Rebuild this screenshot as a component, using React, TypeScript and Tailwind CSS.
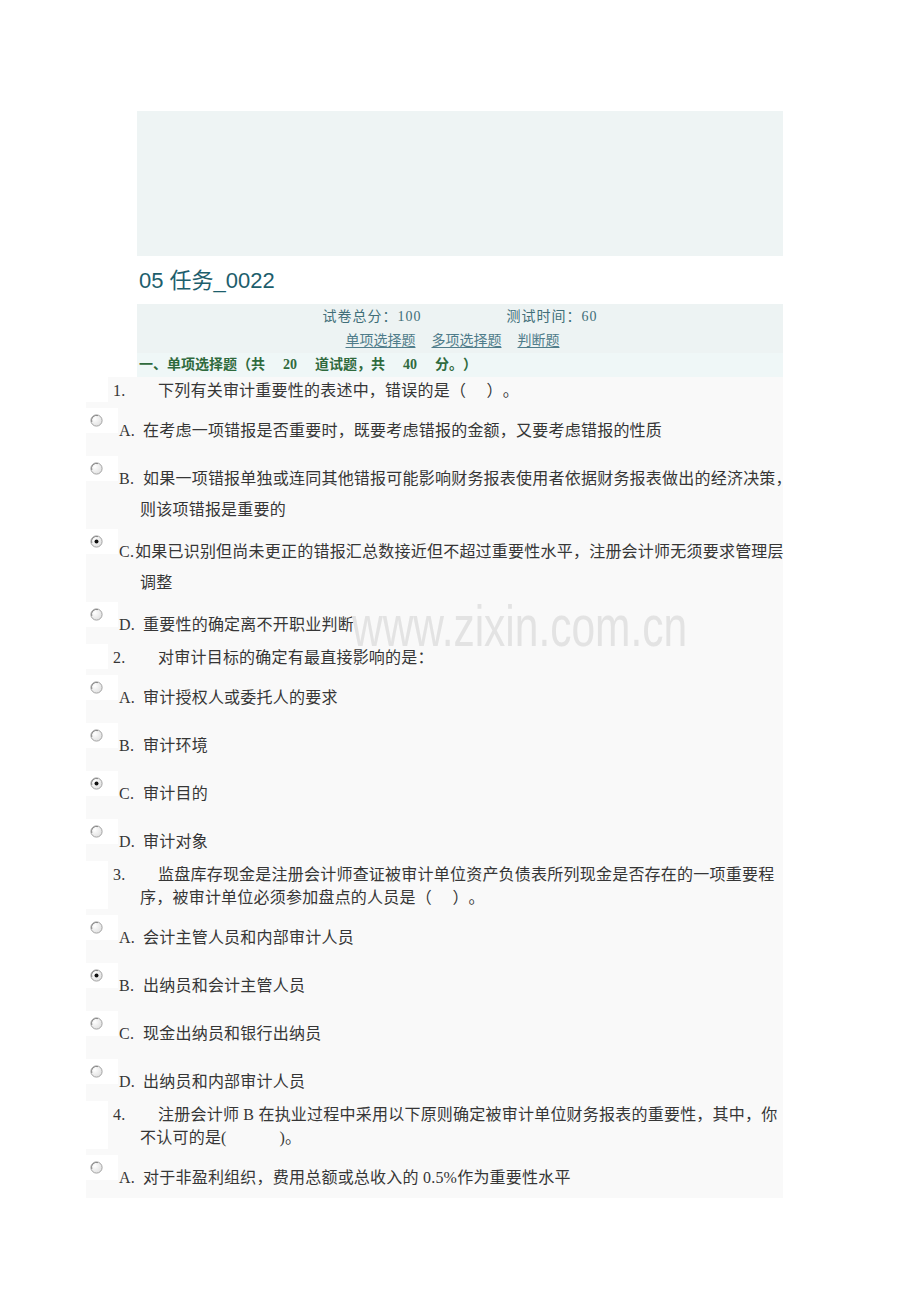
import clsx from 'clsx';

type Opt = { key: string; lines: string[]; checked?: boolean; tight?: boolean };
type Question = { no: string; lines: string[]; opts: Opt[] };

const BODY = "font-['Liberation_Serif','Noto_Sans_CJK_SC',serif] [text-spacing-trim:space-all]";
const SANS = "font-['Liberation_Sans','Noto_Sans_CJK_SC',sans-serif]";

const QUESTIONS: Question[] = [
  {
    no: '1.',
    lines: ['下列有关审计重要性的表述中，错误的是（　 ）。'],
    opts: [
      { key: 'A.', lines: ['在考虑一项错报是否重要时，既要考虑错报的金额，又要考虑错报的性质'] },
      {
        key: 'B.',
        lines: ['如果一项错报单独或连同其他错报可能影响财务报表使用者依据财务报表做出的经济决策，', '则该项错报是重要的'],
      },
      {
        key: 'C.',
        tight: true,
        checked: true,
        lines: ['如果已识别但尚未更正的错报汇总数接近但不超过重要性水平，注册会计师无须要求管理层', '调整'],
      },
      { key: 'D.', lines: ['重要性的确定离不开职业判断'] },
    ],
  },
  {
    no: '2.',
    lines: ['对审计目标的确定有最直接影响的是：'],
    opts: [
      { key: 'A.', lines: ['审计授权人或委托人的要求'] },
      { key: 'B.', lines: ['审计环境'] },
      { key: 'C.', lines: ['审计目的'], checked: true },
      { key: 'D.', lines: ['审计对象'] },
    ],
  },
  {
    no: '3.',
    lines: ['监盘库存现金是注册会计师查证被审计单位资产负债表所列现金是否存在的一项重要程', '序，被审计单位必须参加盘点的人员是（　 ）。'],
    opts: [
      { key: 'A.', lines: ['会计主管人员和内部审计人员'] },
      { key: 'B.', lines: ['出纳员和会计主管人员'], checked: true },
      { key: 'C.', lines: ['现金出纳员和银行出纳员'] },
      { key: 'D.', lines: ['出纳员和内部审计人员'] },
    ],
  },
  {
    no: '4.',
    lines: ['注册会计师 B 在执业过程中采用以下原则确定被审计单位财务报表的重要性，其中，你', '不认可的是(　　　 )。'],
    opts: [{ key: 'A.', lines: ['对于非盈利组织，费用总额或总收入的 0.5%作为重要性水平'] }],
  },
];

function Radio({ checked }: { checked?: boolean }) {
  return (
    <svg width="13" height="13" viewBox="0 0 13 13">
      <defs>
        <radialGradient id="rg" cx="0.35" cy="0.35" r="0.8">
          <stop offset="0" stopColor="#ffffff" />
          <stop offset="1" stopColor="#dcdcdc" />
        </radialGradient>
      </defs>
      <circle cx="6.5" cy="6.5" r="5.6" fill="url(#rg)" stroke="#a3a3a3" strokeWidth="1" />
      <path d="M1.8 8 A5 5 0 0 1 8 1.6" fill="none" stroke="#8a8a8a" strokeWidth="1" />
      {checked && <circle cx="6.5" cy="6.5" r="2" fill="#111" />}
    </svg>
  );
}

function Option({ o }: { o: Opt }) {
  const two = o.lines.length > 1;
  return (
    <div className={clsx('flex pt-[6px]', two ? 'h-[73px]' : 'h-[48px]')}>
      <div className="w-[32px] h-[25px] shrink-0 bg-white pl-[4px] pt-[6px]">
        <Radio checked={o.checked} />
      </div>
      <div className="pt-[7px] pl-[22px] leading-[31px] whitespace-nowrap">
        <span className={clsx('-ml-[21px] inline-block', o.tight ? 'w-[16px]' : 'w-[24px]')}>{o.key}</span>
        {o.lines[0]}
        {two && (
          <>
            <br />
            {o.lines[1]}
          </>
        )}
      </div>
    </div>
  );
}

function QuestionBlock({ q }: { q: Question }) {
  return (
    <div>
      <div className="flex">
        <div className="w-[22px] shrink-0 bg-white" />
        <div className="pt-[2px] pl-[32px] leading-[23px] whitespace-nowrap">
          <span className="-ml-[27px] inline-block w-[45px]">{q.no}</span>
          {q.lines[0]}
          {q.lines[1] && (
            <>
              <br />
              {q.lines[1]}
            </>
          )}
        </div>
      </div>
      {q.opts.map((o) => (
        <Option key={o.key} o={o} />
      ))}
    </div>
  );
}

export default function App() {
  return (
    <div className={clsx('w-[920px] min-h-[1302px] bg-white', BODY)}>
      <div className="ml-[86px] w-[697px] pt-[111px]">
        {/* Banner placeholder */}
        <div className="ml-[51px] h-[145px] bg-[#eef4f4]" />

        {/* Title */}
        <div className={clsx('ml-[51px] h-[48px] flex items-center pl-[2px] text-[22px] text-[#1d5e6c]', SANS)}>
          05 任务_0022
        </div>

        {/* Paper info */}
        <div className="ml-[51px] bg-[#edf3f3] text-[14px] leading-[24px] text-[#3f6e78]">
          <div className="flex justify-center gap-[85px] pt-[1px] tracking-[1px]">
            <span>试卷总分：100</span>
            <span>测试时间：60</span>
          </div>
          <div className="flex justify-center gap-[16px] pr-[15px] text-[#4f7c8a]">
            <a className="underline underline-offset-2">单项选择题</a>
            <a className="underline underline-offset-2">多项选择题</a>
            <a className="underline underline-offset-2">判断题</a>
          </div>
        </div>

        <div className="ml-[51px] h-[24px] bg-[#eff7f7] pl-[2px] text-[14px] font-bold leading-[24px] text-[#2f6a3d] whitespace-nowrap">
          一、单项选择题（共<span className="mx-[18px]">20</span>道试题，共<span className="mx-[18px]">40</span>分。）
        </div>

        {/* Questions */}
        <div className="relative bg-[#f9f9f9] pb-[1px] text-[16px] tracking-[0.22px] text-[#363636]">
          <div
            className={clsx(
              'pointer-events-none absolute left-[266px] top-[233px] origin-left scale-x-[0.745] text-[57px] leading-[32px] text-[#e3e3e3] tracking-normal whitespace-nowrap',
              SANS,
            )}
          >
            www.zixin.com.cn
          </div>
          {QUESTIONS.map((q) => (
            <QuestionBlock key={q.no} q={q} />
          ))}
        </div>
      </div>
    </div>
  );
}
